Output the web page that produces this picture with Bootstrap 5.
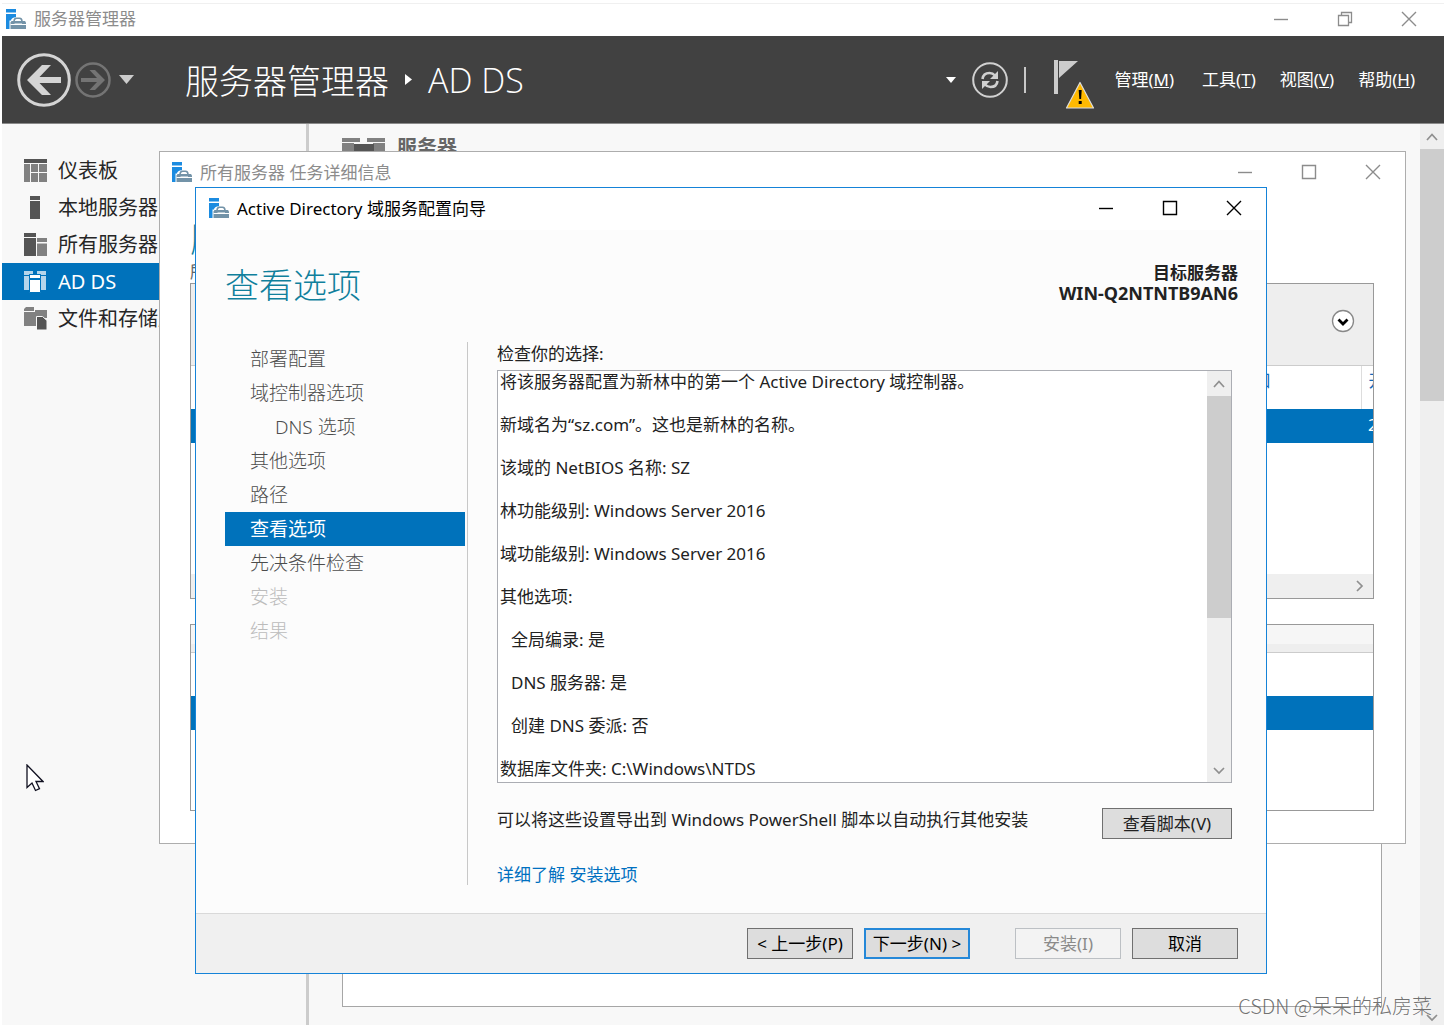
<!DOCTYPE html>
<html lang="zh-CN">
<head>
<meta charset="utf-8">
<meta name="viewport" content="width=device-width, initial-scale=1">
<title>服务器管理器</title>
<link href="https://cdn.jsdelivr.net/npm/bootstrap@5.3.0/dist/css/bootstrap.min.css" rel="stylesheet">
<style>
body{font-family:"Noto Sans","Noto Sans CJK SC",sans-serif;font-size:17px;line-height:21px;color:#222;background:#fff}
button,a{font:inherit;color:inherit;text-decoration:none}
button{border:0;background:none;padding:0}
svg{display:block;flex:none}
.desk{min-height:100vh;padding:3px 3px 0 2px}
.wintitle{font-size:17px;color:#8c8c8c}
.capbtn{width:64px;height:30px;display:flex;align-items:center;justify-content:center;color:#8c8c8c}
.outer-bar{height:33px;border-top:1px solid #f0f0f0;padding:0 3px 3px 4px}
.ribbon{height:88px;background:#414141;border-bottom:1px solid #8a8a8a;padding:0 29px 0 15px;color:#fff}
.crumb{font-size:34px;line-height:44px;font-weight:300;padding-left:3px}
.crumb-cjk{font-family:"Noto Sans CJK SC",sans-serif}
.crumb-latin{font-family:"Open Sans",sans-serif}
.menus{gap:24px}
.menus a:first-child{margin-right:4px}
.side{width:304px;background:#f8f8f8;padding-top:28px}
.side a{height:37px;padding-left:22px;gap:11px;font-size:20px;color:#262626}
.side a.active{background:#0072bb;color:#fff}
.rule{width:3px;background:#ccc}
.pane{background:#f8f8f8;padding:12px 38px 18px 33px}
.pane-head{font-size:20px;font-weight:700;color:#666;gap:12px;height:22px}
.pane-box{background:#fff;border:1px solid #a6a6a6}
.vbar{background:#efefef;width:24px}
.vbar button{height:25px;color:#8f8f8f;display:flex;align-items:center;justify-content:center;width:100%}
.vthumb{background:#cdcdcd}
.win{position:absolute;background:#fff}
.win-details{left:159px;right:41px;top:151px;border:1px solid #adadad}
.win-wizard{left:195px;right:180px;top:187px;border:1px solid #1583d8;background:#fcfcfc}
.details-bar{height:40px;padding-left:12px}
.details-bar .wintitle,.wiz-bar .wintitle{padding-left:8px}
.details-body{padding:23px 31px 32px 30px}
.details-sub{color:#666}
.bigtitle{font-size:34px;line-height:46px;font-weight:300;color:#10809c;font-family:"Noto Sans CJK SC",sans-serif}
.task-panel{border:1px solid #999;overflow:hidden;margin-top:1px}
.task-head{height:82px;background:#eee;border-bottom:1px solid #ccc;padding-right:18px;padding-bottom:8px}
.task-panel table{table-layout:fixed;margin:0;width:100%}
.task-panel th{height:43px;padding:0 90px 14px 0;font-weight:400;color:#1569b8;text-align:right;vertical-align:middle}
.task-panel th + th{padding:0 0 14px 7px;text-align:left;border-left:1px solid #ddd;overflow:hidden;white-space:nowrap}
.task-panel td{height:34px;padding:0;background:#0072bb;color:#fff}
.task-panel td + td{padding:0 0 4px 7px;overflow:hidden;white-space:nowrap}
.task-space{height:131px}
.hbar{height:24px;background:#efefef;padding-right:8px;color:#8f8f8f}
.sub-panel{margin-top:25px;border:1px solid #999}
.sub-a{height:19px;background:#f6f6f6}
.sub-b{height:9px;background:#eee;border-bottom:1px solid #ccc}
.sub-row{margin-top:43px;height:34px;background:#0072bb;margin-bottom:80px}
.wiz-bar{height:42px;background:#fff;padding-left:13px;padding-bottom:2px}
.wiz-bar .wintitle,.wiz-bar .capbtn{color:#000}
.wiz-body{padding:31px 28px 28px 29px}
.target{font-weight:700;text-align:right;padding-bottom:2px}
.target-name{font-size:18px}
.wiz-cols{margin-top:35px}
.steps{width:243px;border-right:1px solid #c8c8c8;padding-right:2px;height:543px}
.steps a{height:34px;padding-left:25px;font-size:19px;color:#4c4c4c;line-height:34px;display:block;font-weight:300}
.steps a.substep{padding-left:50px}
.steps a.active{background:#0072bb;color:#fff;font-weight:400}
.steps a.disabled{color:#bbb}
.review{padding:1px 6px 0 29px}
.review-box{height:413px;background:#fff;border:1px solid #abadb3;margin-top:6px;overflow:hidden}
.review-text{padding:0 2px}
.review-text p{margin:0 0 22px}
.review-text .ind{padding-left:11px}
.export-row{margin-top:25px}
.export-row span{padding-top:1px}
.learn-row{margin-top:25px}
.winbtn{height:31px;width:106px;background:#ddd;border:1px solid #707070;color:#000;white-space:nowrap}
.winbtn.wide{width:130px;color:#222}
.winbtn.primary{border:2px solid #2588d8}
.winbtn:disabled{background:#f3f3f3;border-color:#bcc0c4;color:#8a8a8a}
.wiz-foot{height:60px;background:#f0f0f0;border-top:1px solid #d9d9d9;padding-right:28px;gap:11px}
.wiz-foot .winbtn:nth-child(3){margin-left:34px}
.learn,.learn:hover{color:#0070c0}
.pointer{position:absolute;left:26px;top:764px}
.watermark{position:absolute;right:15px;bottom:5px;font-size:20px;line-height:28px;color:rgba(90,90,90,.85);font-weight:300;font-family:"Noto Sans CJK SC",sans-serif}
</style>
</head>
<body>
<svg width="0" height="0" class="position-absolute" aria-hidden="true">
 <defs>
  <symbol id="app" viewBox="0 0 20 20"><path fill="#1b8be0" d="M0 0h10v3.400H0zM0 5h10v3.200C7 8.200 5 9.500 5 11.500H3.500V20H0z"/><path fill="none" stroke="#7393a8" stroke-width="1.500" d="M8 12.500c0-2.500 1-3.300 2.500-3.300h3c1.500 0 2.500.8 2.500 3.300"/><path fill="#7393a8" d="M5.500 12H19l1 1.500V20H4.500v-6.500z"/><path stroke="#fff" d="M4.500 15.500H9M15.500 15.500H20"/><path fill="#fff" d="M8.500 14.500h7.500v1.500H8.500z"/></symbol>
  <symbol id="min" viewBox="0 0 16 16"><path stroke="currentColor" stroke-width="1.400" d="M1 8.500h14"/></symbol>
  <symbol id="max" viewBox="0 0 16 16"><path fill="none" stroke="currentColor" stroke-width="1.400" d="M1.500 1.500h13v13h-13z"/></symbol>
  <symbol id="cls" viewBox="0 0 16 16"><path stroke="currentColor" stroke-width="1.400" d="M1 1l14 14M15 1L1 15"/></symbol>
  <symbol id="up" viewBox="0 0 12 12"><path fill="none" stroke="currentColor" stroke-width="1.700" d="M1 9l5-5.500L11 9"/></symbol>
  <symbol id="down" viewBox="0 0 12 12"><path fill="none" stroke="currentColor" stroke-width="1.700" d="M1 4l5 5 5-5"/></symbol>
 </defs>
</svg>
<div class="desk d-flex flex-column position-relative overflow-hidden">
 <div class="outer-bar d-flex align-items-center">
  <svg width="20" height="20"><use href="#app"/></svg><span class="wintitle ms-2 me-auto">服务器管理器</span>
  <button class="capbtn" aria-label="最小化"><svg width="16" height="16"><use href="#min"/></svg></button>
  <button class="capbtn" aria-label="还原"><svg width="16" height="16" viewBox="0 0 16 16" fill="none" stroke="currentColor" stroke-width="1.300"><path d="M1.500 4.500h10v10h-10zM4.500 4V1.500h10v10H12"/></svg></button>
  <button class="capbtn" aria-label="关闭"><svg width="16" height="16"><use href="#cls"/></svg></button>
 </div>
 <header class="ribbon d-flex align-items-center">
  <button aria-label="后退"><svg width="54" height="54" viewBox="0 0 54 54"><circle cx="27" cy="27" r="25.300" fill="none" stroke="#d4d4d4" stroke-width="3"/><path fill="#d4d4d4" d="M10 27l15-15h9L22.500 24H44v6H22.500L34 42h-9z"/></svg></button>
  <button class="ms-1" aria-label="前进"><svg width="36" height="36" viewBox="0 0 36 36"><circle cx="18" cy="18" r="16.500" fill="none" stroke="#747474" stroke-width="2.500"/><path fill="#747474" d="M30 18l-10 10h-5.500l7.500-8H6v-4h16l-7.500-8H20z"/></svg></button>
  <button class="ms-2" aria-label="历史"><svg width="15" height="9"><path fill="#ccc" d="M0 0h15L7.500 9z"/></svg></button>
  <div class="crumb ms-5 d-flex align-items-center me-auto"><span class="crumb-cjk">服务器管理器</span><svg class="ms-3 me-3" width="7" height="11"><path fill="#fff" d="M0 0l7 5.500L0 11z"/></svg><span class="crumb-latin">AD DS</span></div>
  <button class="me-3" aria-label="展开"><svg width="10" height="6"><path fill="#fff" d="M0 0h10L5 6z"/></svg></button>
  <button aria-label="刷新"><svg width="36" height="36" viewBox="0 0 36 36"><circle cx="18" cy="18" r="16.800" fill="none" stroke="#d0d0d0" stroke-width="2"/><path d="M10.500 17c.5-4 3-6 7-6 2.500 0 4 .8 5.500 2.500M25.500 19c-.5 4-3 6-7 6-2.500 0-4-.8-5.500-2.500" fill="none" stroke="#d0d0d0" stroke-width="2.600"/><path fill="#d0d0d0" d="M26 9v8h-8zM10 27v-8h8z"/></svg></button>
  <svg class="ms-3" width="2" height="26"><path fill="#c8c8c8" d="M0 0h2v26H0z"/></svg>
  <button class="ms-4 me-3" aria-label="通知"><svg class="ms-1" width="44" height="58" viewBox="0 -6 44 58"><path fill="#ccc" d="M0 3h4v34H0zM5 4h19L5 21z"/><path fill="#ffb900" stroke="#ddd" stroke-width="1.200" stroke-linejoin="round" d="M26 25.500L39.500 51h-27z"/><path fill="#000" d="M24.700 33h3l-.6 9h-1.800zM24.700 44h3v3h-3z"/></svg></button>
  <nav class="menus d-flex"><a href="#">管理(<u>M</u>)</a><a href="#">工具(<u>T</u>)</a><a href="#">视图(<u>V</u>)</a><a href="#">帮助(<u>H</u>)</a></nav>
 </header>
 <div class="d-flex flex-grow-1">
  <nav class="side flex-shrink-0">
   <a href="#" class="d-flex align-items-center"><svg width="23" height="23"><path fill="#555" d="M0 0h23v4H0z"/><path fill="#818181" d="M0 5h6v18H0zM7 5h7v8H7zM15 5h8v8h-8zM7 14h7v9H7zM15 14h8v9h-8z"/></svg>仪表板</a>
   <a href="#" class="d-flex align-items-center"><svg width="23" height="23"><path fill="#555" d="M6 0h10v4H6zM6 5h10v18H6z"/></svg>本地服务器</a>
   <a href="#" class="d-flex align-items-center"><svg width="23" height="23"><path fill="#555" d="M0 0h12v4H0zM0 5h12v18H0z"/><path fill="#818181" d="M13 5h10v4H13zM13 10.500h10V23H13z"/></svg>所有服务器</a>
   <a href="#" class="active d-flex align-items-center"><svg width="23" height="23"><path fill="#b5d5eb" d="M0 1h9v3H5v16H0zM13 1h9v19h-5V4h-4z"/><path stroke="#0072bb" d="M0 5.500h5M17 5.500h5"/><path fill="#fff" stroke="#0072bb" d="M5.500 4.500h11v4h-11zM5.500 9.500h11v13h-11z"/></svg>AD DS</a>
   <a href="#" class="d-flex align-items-center"><svg width="23" height="23"><path fill="#818181" d="M0 2l2-2h8v4H0zM0 5h11V3h12v8H12v8H0z"/><path fill="#555" stroke="#f8f8f8" d="M12.500 9.500h6l4.500 4V23H12.500z"/></svg>文件和存储服务</a>
  </nav>
  <div class="rule"></div>
  <main class="pane flex-grow-1 d-flex flex-column">
   <div class="pane-head d-flex align-items-center"><svg width="43" height="22"><path fill="#818181" d="M0 2h18v4h-6v12H0zM25 2h18v16H31V6h-6z"/><path stroke="#f8f8f8" d="M0 6.500h12M31 6.500h12"/><path fill="#555" d="M12 8h20v14H12z"/></svg>服务器</div>
   <div class="pane-box flex-grow-1 mt-2"></div>
  </main>
  <div class="vbar d-flex flex-column"><button aria-label="向上滚动"><svg width="12" height="12"><use href="#up"/></svg></button><div class="vthumb" style="height:28%"></div><button class="mt-auto" aria-label="向下滚动"><svg width="12" height="12" class="mt-2"><use href="#down"/></svg></button></div>
 </div>

 <section class="win win-details">
  <div class="details-bar d-flex align-items-center"><svg width="20" height="20"><use href="#app"/></svg><span class="wintitle me-auto">所有服务器 任务详细信息</span>
   <button class="capbtn" aria-label="最小化"><svg width="16" height="16"><use href="#min"/></svg></button>
   <button class="capbtn" aria-label="最大化"><svg width="16" height="16"><use href="#max"/></svg></button>
   <button class="capbtn" aria-label="关闭"><svg width="16" height="16"><use href="#cls"/></svg></button></div>
  <div class="details-body">
   <div class="bigtitle">服</div><div class="details-sub">所</div>
   <div class="task-panel">
    <div class="task-head d-flex align-items-center justify-content-end"><button aria-label="展开"><svg width="24" height="24" viewBox="0 0 24 24"><circle cx="12" cy="12" r="10.500" fill="#fff" stroke="#888" stroke-width="1.300"/><path d="M7.500 10.500l4.500 4.500 4.500-4.500" fill="none" stroke="#000" stroke-width="2.800"/></svg></button></div>
    <table><colgroup><col><col style="width:12px"></colgroup><thead><tr><th>通知</th><th>开</th></tr></thead><tbody><tr><td></td><td>2</td></tr></tbody></table>
    <div class="task-space"></div>
    <div class="hbar d-flex align-items-center justify-content-end"><svg width="10" height="12"><path fill="none" stroke="currentColor" stroke-width="1.700" d="M2 1l5 5-5 5"/></svg></div>
   </div>
   <div class="sub-panel"><div class="sub-a"></div><div class="sub-b"></div><div class="sub-row"></div></div>
  </div>
 </section>

 <section class="win win-wizard">
  <div class="wiz-bar d-flex align-items-center"><svg width="20" height="20"><use href="#app"/></svg><span class="wintitle me-auto">Active Directory 域服务配置向导</span>
   <button class="capbtn" aria-label="最小化"><svg width="16" height="16"><use href="#min"/></svg></button>
   <button class="capbtn" aria-label="最大化"><svg width="16" height="16"><use href="#max"/></svg></button>
   <button class="capbtn" aria-label="关闭"><svg width="16" height="16"><use href="#cls"/></svg></button></div>
  <div class="wiz-body">
   <div class="d-flex justify-content-between align-items-center"><h1 class="bigtitle m-0">查看选项</h1><div class="target">目标服务器<br><span class="target-name">WIN-Q2NTNTB9AN6</span></div></div>
   <div class="wiz-cols d-flex">
    <nav class="steps flex-shrink-0"><a href="#">部署配置</a><a href="#">域控制器选项</a><a href="#" class="substep">DNS 选项</a><a href="#">其他选项</a><a href="#">路径</a><a href="#" class="active">查看选项</a><a href="#">先决条件检查</a><a class="disabled">安装</a><a class="disabled">结果</a></nav>
    <div class="review flex-grow-1">
     <div>检查你的选择:</div>
     <div class="review-box d-flex">
      <div class="review-text flex-grow-1">
       <p>将该服务器配置为新林中的第一个 Active Directory 域控制器。</p><p>新域名为“sz.com”。这也是新林的名称。</p><p>该域的 NetBIOS 名称: SZ</p><p>林功能级别: Windows Server 2016</p><p>域功能级别: Windows Server 2016</p><p>其他选项:</p><p class="ind">全局编录: 是</p><p class="ind">DNS 服务器: 是</p><p class="ind">创建 DNS 委派: 否</p><p>数据库文件夹: C:\Windows\NTDS</p>
      </div>
      <div class="vbar d-flex flex-column"><button aria-label="向上滚动"><svg width="12" height="12"><use href="#up"/></svg></button><div class="vthumb" style="height:54%"></div><button class="mt-auto" aria-label="向下滚动"><svg width="12" height="12"><use href="#down"/></svg></button></div>
     </div>
     <div class="export-row d-flex justify-content-between align-items-start"><span>可以将这些设置导出到 Windows PowerShell 脚本以自动执行其他安装</span><button class="winbtn wide">查看脚本(V)</button></div>
     <div class="learn-row"><a href="#" class="learn">详细了解 安装选项</a></div>
    </div>
   </div>
  </div>
  <div class="wiz-foot d-flex align-items-center justify-content-end"><button class="winbtn">&lt; 上一步(P)</button><button class="winbtn primary">下一步(N) &gt;</button><button class="winbtn" disabled>安装(I)</button><button class="winbtn">取消</button></div>
 </section>
 <svg class="pointer" width="18" height="28"><path fill="#fff" stroke="#101020" stroke-width="1.300" d="M1 1v22.500l5-4.500 3.500 7.500 4-1.800L10 17.500h7z"/></svg>
 <div class="watermark">CSDN @呆呆的私房菜</div>
</div>
<script src="https://cdn.jsdelivr.net/npm/bootstrap@5.3.0/dist/js/bootstrap.bundle.min.js"></script>
</body>
</html>
